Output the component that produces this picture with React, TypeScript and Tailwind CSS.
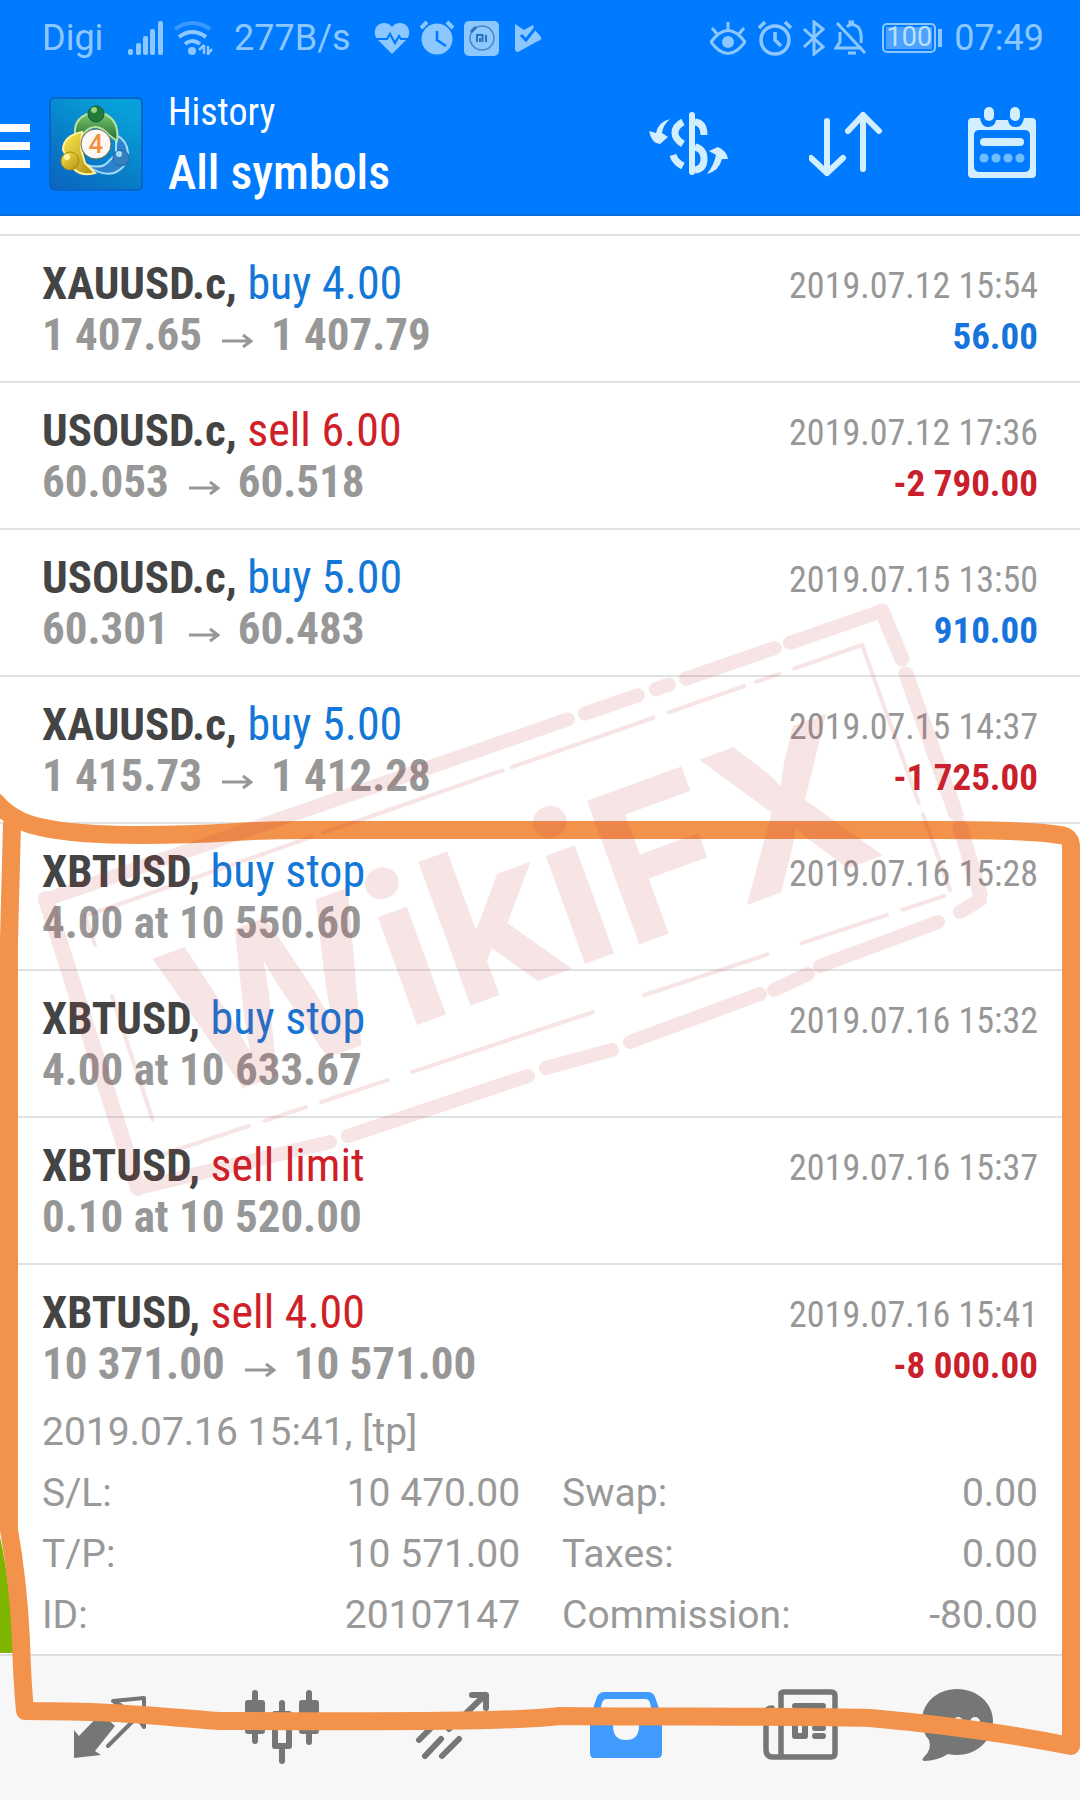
import type { ReactNode } from "react";

type Side = "buy" | "sell";

interface Deal {
  symbol: string;
  side: Side;
  action: string;
  from: string;
  to?: string;
  time: string;
  profit?: string;
}

const DEALS: Deal[] = [
  { symbol: "XAUUSD.c", side: "buy", action: "buy 4.00", from: "1 407.65", to: "1 407.79", time: "2019.07.12 15:54", profit: "56.00" },
  { symbol: "USOUSD.c", side: "sell", action: "sell 6.00", from: "60.053", to: "60.518", time: "2019.07.12 17:36", profit: "-2 790.00" },
  { symbol: "USOUSD.c", side: "buy", action: "buy 5.00", from: "60.301", to: "60.483", time: "2019.07.15 13:50", profit: "910.00" },
  { symbol: "XAUUSD.c", side: "buy", action: "buy 5.00", from: "1 415.73", to: "1 412.28", time: "2019.07.15 14:37", profit: "-1 725.00" },
  { symbol: "XBTUSD", side: "buy", action: "buy stop", from: "4.00 at 10 550.60", time: "2019.07.16 15:28" },
  { symbol: "XBTUSD", side: "buy", action: "buy stop", from: "4.00 at 10 633.67", time: "2019.07.16 15:32" },
  { symbol: "XBTUSD", side: "sell", action: "sell limit", from: "0.10 at 10 520.00", time: "2019.07.16 15:37" },
  { symbol: "XBTUSD", side: "sell", action: "sell 4.00", from: "10 371.00", to: "10 571.00", time: "2019.07.16 15:41", profit: "-8 000.00" },
];

const DETAILS = [
  ["S/L:", "10 470.00", "Swap:", "0.00"],
  ["T/P:", "10 571.00", "Taxes:", "0.00"],
  ["ID:", "20107147", "Commission:", "-80.00"],
];

function StatusBar() {
  return (
    <div className="flex h-[75px] items-center justify-between pl-[42px] pr-[36px] font-['Roboto',sans-serif] text-[36px] leading-[40px] text-[#8cc8ff]">
      <div className="flex items-center">
        <span className="w-[86px]">Digi</span>
        <svg className="h-9 w-9" viewBox="0 0 36 36" fill="currentColor">
          <rect x="0" y="29" width="5" height="6" rx="2" />
          <rect x="8" y="23" width="5" height="12" rx="2" />
          <rect x="15" y="16" width="5" height="19" rx="2" />
          <rect x="22" y="9" width="5" height="26" rx="2" />
          <rect x="30" y="1" width="5" height="34" rx="2" />
        </svg>
        <svg className="ml-2.5 h-9 w-10" viewBox="0 0 40 36" fill="none" stroke="currentColor" strokeWidth="4">
          <path d="M1 9Q18-3 36 9" opacity=".4" />
          <path d="M5 17Q18 7 32 17" />
          <path d="M11 24Q18 18 26 24" />
          <circle cx="18" cy="31" r="4" fill="currentColor" stroke="none" />
          <path d="M30 25v9m-5-4 5-5M34 35v-9m4 3-4 5" strokeWidth="2.5" />
        </svg>
        <span className="ml-5 w-[140px] whitespace-nowrap">277B/s</span>
        <svg className="h-9 w-9" viewBox="0 0 36 36">
          <path d="M18 34 3 19C-2 12 2 3 10 3q5 0 8 4 3-4 8-4c8 0 12 9 7 16Z" fill="currentColor" />
          <path d="M1 19h12l3-5 5 9 4-7 2 3h8" fill="none" stroke="#007aff" strokeWidth="2.2" />
        </svg>
        <svg className="ml-2.5 h-9 w-9" viewBox="0 0 36 36">
          <circle cx="17" cy="19" r="15.500" fill="currentColor" />
          <path d="m1 8 6-6M33 8l-6-6" stroke="currentColor" strokeWidth="4" />
          <path d="M17 11v9l9 6" fill="none" stroke="#007aff" strokeWidth="2.5" />
        </svg>
        <svg className="ml-2 h-9 w-9" viewBox="0 0 36 36">
          <rect width="35" height="35" y="1" rx="5" fill="currentColor" />
          <circle cx="18" cy="18" r="12" fill="none" stroke="#4687c9" strokeWidth="1.500" />
          <path d="m7 12 5-5" stroke="#2672bd" strokeWidth="3" />
          <path d="M13 22v-7h5.500v7M16 18v4M22 15v7" fill="none" stroke="#2672bd" strokeWidth="2" />
        </svg>
        <svg className="ml-3.5 h-9 w-7" viewBox="0 0 28 36">
          <path d="M1 4 10 10 19 5l2 5 6 7q1 3-3 4L4 32q-3 0-3-3Z" fill="currentColor" />
          <path d="m7 15 5 5L23 6" fill="none" stroke="#007aff" strokeWidth="3" />
        </svg>
      </div>
      <div className="flex items-center">
        <svg className="h-9 w-9" viewBox="0 0 36 36" fill="none" stroke="currentColor" strokeWidth="3">
          <path d="M1 22Q18-1 35 22 18 45 1 22Z" />
          <circle cx="18" cy="22" r="6" fill="currentColor" stroke="none" />
          <path d="M18 10V2M7 14 2 8M29 14l5-6" />
        </svg>
        <svg className="ml-3 h-9 w-9" viewBox="0 0 36 36" fill="none" stroke="currentColor" strokeWidth="3.500">
          <circle cx="17" cy="20" r="14" />
          <path d="m1 8 6-6M33 8l-6-6M17 12v8l6 6" />
        </svg>
        <svg className="ml-2 h-9 w-6" viewBox="0 0 24 36" fill="none" stroke="currentColor" strokeWidth="3">
          <path d="m2 9 19 18-9 7V2l9 7L2 27" />
        </svg>
        <svg className="ml-2 h-9 w-9" viewBox="0 0 36 36" fill="none" stroke="currentColor" strokeWidth="3">
          <path d="M6 12v10l-4 6h26M3 3l28 30M13 7q4-5 11 0 4 4 3 16M14 33h8M16 5V2h4" />
        </svg>
        <div className="ml-3 flex h-[30px] w-[54px] items-center justify-center rounded-[5px] border-2 border-current p-0.5">
          <span className="flex h-full w-full items-center justify-center bg-white/30 text-[27px] leading-none text-[#b9e0ff]">100</span>
        </div>
        <span className="ml-0.5 h-[18px] w-1 bg-current" />
        <time className="ml-3">07:49</time>
      </div>
    </div>
  );
}

function AppLogo() {
  return (
    <svg className="h-[94px] w-[94px]" viewBox="0 0 94 94">
      <defs>
        <linearGradient id="tile" x1="0" y1="1" x2=".6" y2="0">
          <stop offset="0" stopColor="#0a63c0" />
          <stop offset=".5" stopColor="#087fc8" />
          <stop offset="1" stopColor="#08a0da" />
        </linearGradient>
        <linearGradient id="gold" x1="0" y1="0" x2="1" y2="1">
          <stop offset="0" stopColor="#fbe94e" />
          <stop offset="1" stopColor="#b08c10" />
        </linearGradient>
        <linearGradient id="green" x1="0" y1="0" x2="0" y2="1">
          <stop offset="0" stopColor="#7cc86a" />
          <stop offset="1" stopColor="#1d6a35" />
        </linearGradient>
      </defs>
      <rect x="1" y="1" width="92" height="92" rx="4" fill="url(#tile)" stroke="#0765c8" strokeWidth="2" />
      <path d="M67 38q11 5 12 18 0 14-14 20-14 3-27-8 14 4 20-2l9-9Z" fill="#2b83cd" stroke="#a4dcf6" strokeWidth="2" />
      <path d="M27 42q-5-20 14-26h12q18 6 15 28l-8-6q-13-15-25-2Z" fill="url(#green)" stroke="#b6e3a0" strokeWidth="2" />
      <path d="M33 35Q14 39 14 53l10 18q8 9 22 5-4-4-10-10l-4-14Z" fill="url(#gold)" stroke="#fff19a" strokeWidth="2" />
      <circle cx="47" cy="17" r="8" fill="#237a3a" stroke="#185d33" />
      <circle cx="45" cy="13" r="3" fill="#8fd583" />
      <circle cx="21" cy="64" r="9" fill="url(#gold)" stroke="#a88a1b" />
      <circle cx="18" cy="60" r="3" fill="#fff6a8" />
      <circle cx="72" cy="61" r="8" fill="#347fc0" stroke="#2668a8" />
      <circle cx="70" cy="57" r="3" fill="#a7daf5" />
      <circle cx="47" cy="47" r="15" fill="#fdf8f6" stroke="#6d6a4a" />
      <text x="47" y="56" textAnchor="middle" className="fill-[#f0913f] font-['Roboto',sans-serif] text-[26px] font-medium">4</text>
    </svg>
  );
}

function AppHeader() {
  return (
    <header className="border-b-2 border-[#0870dd] bg-[#007aff] text-white">
      <StatusBar />
      <div className="flex h-[139px] items-start">
        <button aria-label="Open menu" className="mt-[49px] flex w-[30px] flex-col gap-2.5">
          <span className="h-2 w-full bg-white" />
          <span className="h-2 w-full bg-white" />
          <span className="h-2 w-full bg-white" />
        </button>
        <div className="ml-[19px] mt-[22px]">
          <AppLogo />
        </div>
        <div className="ml-[25px] mt-[13px] flex-1 font-['Roboto_Condensed','Roboto',sans-serif]">
          <p className="text-[38px] leading-[48px]">History</p>
          <h1 className="mt-1 text-[48px] font-medium leading-[66px]">All symbols</h1>
        </div>
        <div className="mr-[43px] mt-7 flex items-start gap-[80px] text-[#d3efff]">
          <button aria-label="Filter symbols">
            <svg className="h-20 w-20" viewBox="0 0 80 80" fill="none" stroke="currentColor" strokeWidth="6">
              <path d="M43 12v57" strokeLinecap="round" />
              <path d="M46 19q9 1 9 13M34 19q-8 4-8 11 0 6 8 11M46 44q9 2 9 12t-9 11M24 52q2 7 10 11" strokeWidth="7" />
              <path d="m0 28 7 2Q9 19 21 16q-7 6-8 14l6 4-8 7q-8 0-11-13ZM79 56q-1-8-10-12L60 48l7 4Q65 62 58 71q12-3 15-15Z" fill="currentColor" stroke="none" />
            </svg>
          </button>
          <button aria-label="Sort">
            <svg className="h-20 w-[78px]" viewBox="0 0 78 80" fill="none" stroke="currentColor" strokeWidth="6" strokeLinecap="round" strokeLinejoin="round">
              <path d="M18 18v52M2 55l16 15 16-15M54 66V12M39 28l15-16 16 16" />
            </svg>
          </button>
          <button aria-label="Choose period">
            <svg className="h-20 w-[70px]" viewBox="0 0 70 80">
              <path fillRule="evenodd" d="M5 15h8q2 10 9 9 6-1 7-7h12q1 7 7 7 7 1 9-9h8q4 0 4 4v52q0 4-4 4H5q-4 0-4-4V19q0-4 4-4Zm8 12q-6 0-6 5v31q0 6 6 6h44q6 0 6-6V32q0-5-6-5Z" fill="currentColor" />
              <rect x="17" y="4" width="10" height="14" rx="5" fill="currentColor" />
              <rect x="43" y="4" width="10" height="14" rx="5" fill="currentColor" />
              <rect x="13" y="35" width="44" height="8" rx="4" fill="currentColor" />
              <g fill="#6fbcff">
                <circle cx="17" cy="55" r="4.500" />
                <circle cx="29" cy="55" r="4.500" />
                <circle cx="41" cy="55" r="4.500" />
                <circle cx="53" cy="55" r="4.500" />
              </g>
            </svg>
          </button>
        </div>
      </div>
    </header>
  );
}

function PriceArrow() {
  return (
    <svg className="ml-5 mr-[18px] mt-3 inline-block h-4 w-[31px]" viewBox="0 0 31 16" fill="none" stroke="currentColor" strokeWidth="3">
      <path d="M0 8h28M21 2l8 6-8 6" />
    </svg>
  );
}

function DealRow({ deal }: { deal: Deal }) {
  const loss = deal.profit?.startsWith("-");
  return (
    <div className="flex h-[147px] justify-between border-t-2 border-[#e0e2e2] pl-[42px] pr-[42px] pt-4 font-['Roboto_Condensed','Roboto',sans-serif]">
      <div>
        <p className="text-[46px] leading-[62px] text-[#444]">
          <span className="text-[45px] font-bold">{deal.symbol},</span>{" "}
          <span className={deal.side === "buy" ? "text-[#1377d8]" : "text-[#cf2028]"}>{deal.action}</span>
        </p>
        <p className="flex items-center text-[45px] font-bold leading-[40px] text-[#979797]">
          {deal.from}
          {deal.to && (
            <>
              <PriceArrow />
              {deal.to}
            </>
          )}
        </p>
      </div>
      <div className="text-right">
        <time className="mt-2 block text-[36px] leading-[52px] text-[#979797]">{deal.time}</time>
        {deal.profit && (
          <p className={`text-[37px] font-bold leading-[50px] ${loss ? "text-[#c9202b]" : "text-[#1774dc]"}`}>{deal.profit}</p>
        )}
      </div>
    </div>
  );
}

function DealDetails() {
  return (
    <div className="-mt-2 pb-2 pl-[42px] pr-[42px] font-['Roboto',sans-serif] text-[39px] text-[#999]">
      <p className="leading-[61px]">2019.07.16 15:41, [tp]</p>
      <table className="w-full table-fixed leading-[61px]">
        <tbody>
          {DETAILS.map(([label, value, label2, value2]) => (
            <tr key={label}>
              <th scope="row" className="w-[20%] p-0 text-left font-normal">{label}</th>
              <td className="p-0 text-right">{value}</td>
              <th scope="row" className="w-[30%] py-0 pl-[42px] pr-0 text-left font-normal">{label2}</th>
              <td className="w-[22%] p-0 text-right">{value2}</td>
            </tr>
          ))}
        </tbody>
      </table>
    </div>
  );
}

function NavButton({ label, active, children }: { label: string; active?: boolean; children: ReactNode }) {
  return (
    <button
      aria-label={label}
      aria-current={active ? "page" : undefined}
      className={`flex flex-1 items-start justify-center ${active ? "text-[#419bff]" : "text-[#747775]"}`}
    >
      <svg className="h-20 w-20 overflow-visible" viewBox="0 0 80 80" fill="none" stroke="currentColor" strokeWidth="6" strokeLinecap="round" strokeLinejoin="round">
        {children}
      </svg>
    </button>
  );
}

function BottomNav() {
  return (
    <nav className="flex flex-1 border-t-2 border-[#dddfdf] bg-[#f7f7f7] px-6 pt-[30px]">
      <NavButton label="Quotes">
        <path d="M4 44v28l27-3-6-4 20-25-14-13L9 50Z" fill="currentColor" stroke="none" />
        <path d="M38 60 67 31l7 10V12l-31 3 9 5-18 16" strokeWidth="4" />
      </NavButton>
      <NavButton label="Charts">
        <path d="M13 7v48M67 7v49M40 17v58" />
        <path d="M6 17h14v28H6ZM60 17h14v28H60Z" fill="currentColor" />
        <path d="M33 28h14v32H33Z" fill="#f7f7f7" />
      </NavButton>
      <NavButton label="Trade">
        <path d="m5 54 25-25 10 10 31-30M58 9h14v13M11 70l16-17M28 70l17-17M35 43l2-2" />
      </NavButton>
      <NavButton label="History" active>
        <path fillRule="evenodd" d="M19 6h43q5 0 7 5l7 20v36q0 5-5 5H8q-4 0-4-5V31l7-20q2-5 8-5Zm2 7q-4 0-5 4l-4 16h15v7q0 14 13 14t13-14v-7h15l-4-16q-1-4-5-4Z" fill="currentColor" stroke="none" />
      </NavButton>
      <NavButton label="News">
        <path d="M25 6h48q4 0 4 4v57q0 4-4 4H15q-7 0-7-7V28q0-6 6-6M23 7v63" strokeWidth="5.500" />
        <path d="M37 20h28M37 35h10v15H37ZM57 42h8M57 50h8" />
      </NavButton>
      <NavButton label="Messages">
        <path d="M27 3c20 0 36 14 36 32S48 69 27 69q-5 0-9-1Q7 75-6 75-9 74-6 71 2 64-1 54-8 46-8 35C-8 17 7 3 27 3Z" fill="currentColor" stroke="none" />
        <path d="M11 36v1M28 36v1M45 36v1" stroke="#f7f7f7" strokeWidth="10" />
      </NavButton>
    </nav>
  );
}

// Hand-drawn marker plus the rubber stamp, both lie over the whole screen.
function Annotations() {
  return (
    <svg aria-hidden="true" className="pointer-events-none absolute inset-0 h-full w-full" viewBox="0 0 1080 1800" preserveAspectRatio="none">
      <path d="M0 1537Q10 1580 14 1653H0Z" fill="#7db500" />
      <path
        d="M-4 802Q12 821 40 827 75 835 140 835c90 0 90-5 160-5H940q90 0 120 5 11 1 11 12V1746C1020 1736 960 1726 870 1718 810 1716 640 1717 560 1716 500 1723 340 1721 220 1721 150 1716 120 1711 25 1711Q22 1680 21 1640 18 1580 9 1530V940L12 824"
        fill="none"
        stroke="#f2924b"
        strokeWidth="18"
        strokeLinejoin="round"
        strokeLinecap="round"
      />
      <g fill="none" stroke="#c62f3b" opacity=".12" strokeLinejoin="round" strokeLinecap="round">
        <path d="M48 899 882 611" strokeWidth="14" strokeDasharray="550 18 56 19 14 18 94 16 200" />
        <path d="m882 611 20 48M906 674l50 140M960 826l20 68" strokeWidth="15" />
        <path d="m980 900-20 12M938 922l-118 44M808 974l-34 16M760 994l-130 48M612 1050l-66 18M528 1076l-180 60M330 1142 138 1188" strokeWidth="14" />
        <path d="m46 899 92 289" strokeWidth="16" />
        <path d="M85 916 862 645l88 245" strokeWidth="4" strokeDasharray="240 12 190 10 150 16 80 13 24 16" />
        <path d="m944 896-780 258-78-236" strokeWidth="4" strokeDasharray="44 16 90 36 130 54 190 26 70 16" />
      </g>
      <text x="200" y="1104" transform="rotate(-20 200 1104)" fill="#c62f3b" opacity=".12" className="font-['Inter',sans-serif] text-[210px] font-bold">
        WikiFX
      </text>
    </svg>
  );
}

export default function App() {
  return (
    <main className="relative flex min-h-screen flex-col overflow-hidden bg-[#fefffe]">
      <AppHeader />
      <section aria-label="Order history" className="pt-[18px]">
        {DEALS.map((deal) => (
          <DealRow key={deal.time} deal={deal} />
        ))}
        <DealDetails />
      </section>
      <BottomNav />
      <Annotations />
    </main>
  );
}
